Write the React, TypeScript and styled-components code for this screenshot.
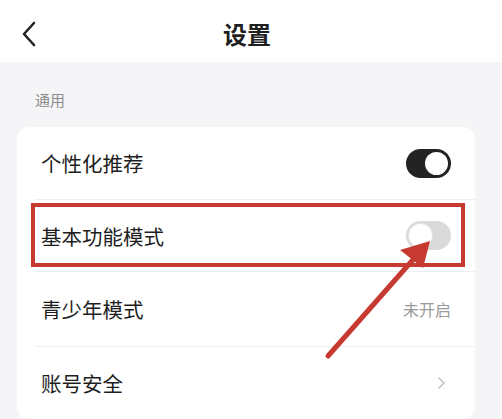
import React from 'react';
import styled, { createGlobalStyle } from 'styled-components';

const Global = createGlobalStyle`
  html, body {
    margin: 0;
    padding: 0;
    background: #f5f5f7;
    font-family: "Noto Sans CJK SC", "Noto Sans", sans-serif;
  }
`;

const Page = styled.div`
  position: relative;
  width: 502px;
  height: 419px;
  overflow: hidden;
  background: #f5f5f7;
`;

const Header = styled.div`
  height: 62px;
  background: #fff;
  display: flex;
  align-items: center;
  justify-content: center;
  position: relative;
`;

const BackBtn = styled.div`
  position: absolute;
  left: 20px;
  top: 21px;
  width: 20px;
  height: 26px;
`;

const Title = styled.h1`
  margin: 0 8px 0 0;
  font-size: 24px;
  font-weight: 700;
  color: #1f1f1f;
  transform: translateY(2px);
`;

const SectionLabel = styled.div`
  padding: 27px 0 0 35px;
  height: 38px;
  font-size: 15px;
  color: #8c8c8c;
`;

const Card = styled.div`
  position: relative;
  margin: 0 27px 0 17px;
  background: #fff;
  border-radius: 12px;
`;

const Row = styled.div<{ $h: number; $last?: boolean }>`
  height: ${(p) => p.$h}px;
  margin-left: 18px;
  padding: 0 24px 0 6px;
  display: flex;
  align-items: center;
  justify-content: space-between;
  border-bottom: ${(p) => (p.$last ? 'none' : '1px solid #efefef')};
  box-sizing: border-box;
`;

const Label = styled.span`
  font-size: 20.5px;
  color: #1e1e1e;
`;

const Value = styled.span`
  font-size: 16px;
  color: #9a9a9a;
`;

const Toggle = styled.div<{ $on: boolean }>`
  width: 45px;
  height: 29px;
  border-radius: 15px;
  background: ${(p) => (p.$on ? '#232323' : '#dadada')};
  position: relative;
  flex-shrink: 0;
  &::after {
    content: '';
    position: absolute;
    top: 3px;
    left: ${(p) => (p.$on ? '19px' : '3px')};
    width: 23px;
    height: 23px;
    border-radius: 50%;
    background: #fff;
    box-shadow: ${(p) => (p.$on ? 'none' : '0 0 0 1px #e4e4e4')};
  }
`;

const Highlight = styled.div`
  position: absolute;
  left: 14px;
  top: 76px;
  width: 434px;
  height: 64px;
  border: 4px solid #c63a31;
  box-sizing: border-box;
  pointer-events: none;
`;

const Arrow = styled.svg`
  position: absolute;
  left: 0;
  top: 0;
  pointer-events: none;
`;

export default function App() {
  return (
    <Page>
      <Global />
      <Header>
        <BackBtn>
          <svg width="20" height="26" viewBox="0 0 20 26">
            <path d="M14 2 L4 13 L14 24" fill="none" stroke="#222" strokeWidth="2.6" strokeLinecap="round" strokeLinejoin="round" />
          </svg>
        </BackBtn>
        <Title>设置</Title>
      </Header>
      <SectionLabel>通用</SectionLabel>
      <Card>
        <Row $h={73}>
          <Label>个性化推荐</Label>
          <Toggle $on />
        </Row>
        <Row $h={72}>
          <Label>基本功能模式</Label>
          <Toggle $on={false} />
        </Row>
        <Row $h={75}>
          <Label>青少年模式</Label>
          <Value>未开启</Value>
        </Row>
        <Row $h={72} $last>
          <Label>账号安全</Label>
          <svg width="10" height="14" viewBox="0 0 10 14" style={{ marginRight: 4 }}>
            <path d="M2 2 L7 7 L2 12" fill="none" stroke="#c4c4c4" strokeWidth="1.6" strokeLinecap="round" strokeLinejoin="round" />
          </svg>
        </Row>
        <Highlight />
      </Card>
      <Arrow width="502" height="419" viewBox="0 0 502 419">
        <line x1="328" y1="356" x2="418" y2="254" stroke="#c63a31" strokeWidth="5" strokeLinecap="round" />
        <polygon points="430,241 400,250 423,268" fill="#c63a31" />
      </Arrow>
    </Page>
  );
}
